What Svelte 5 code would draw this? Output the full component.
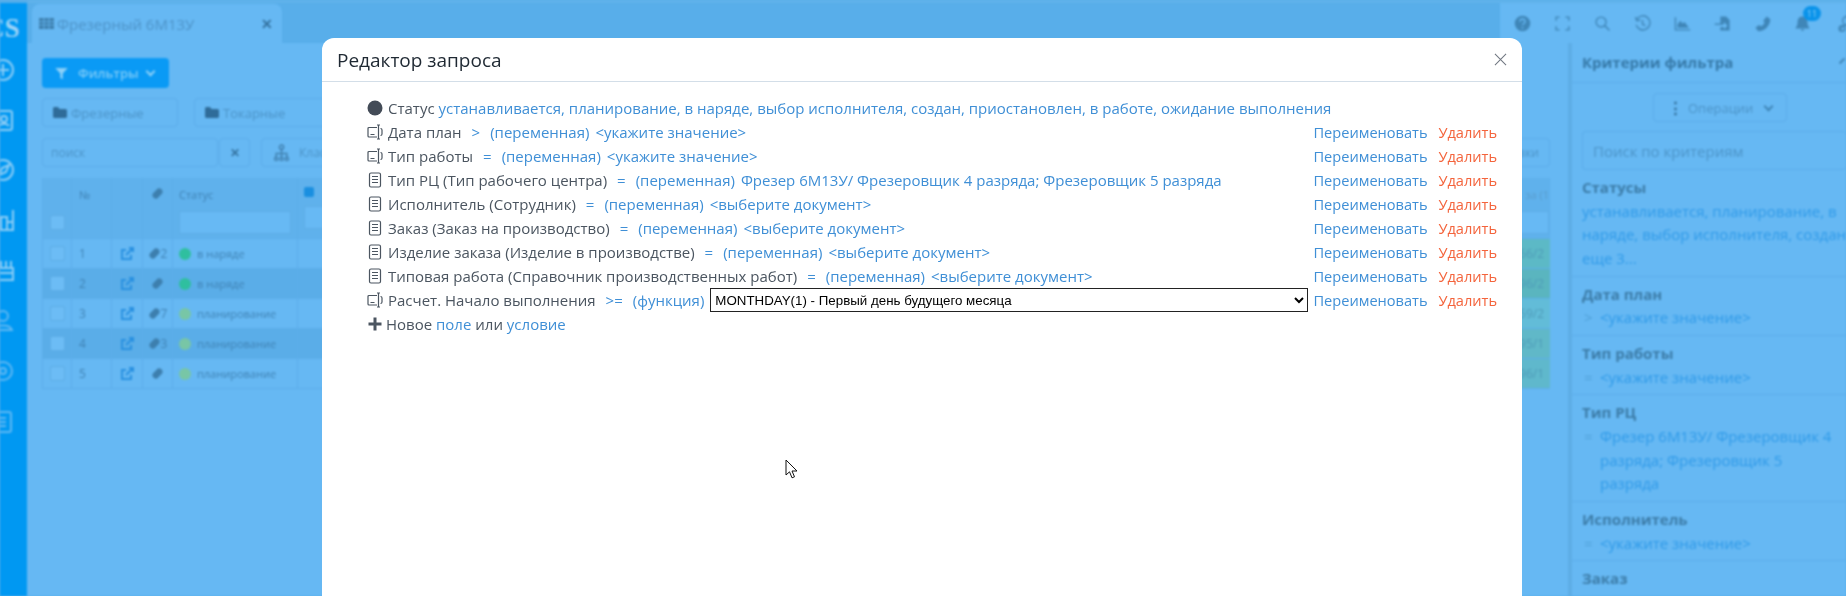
<script>
  const rows = [
    { icon: "var", name: "Дата план", op: ">", kind: "(переменная)", value: "<укажите значение>" },
    { icon: "var", name: "Тип работы", op: "=", kind: "(переменная)", value: "<укажите значение>" },
    { icon: "doc", name: "Тип РЦ (Тип рабочего центра)", op: "=", kind: "(переменная)", value: "Фрезер 6М13У/ Фрезеровщик 4 разряда; Фрезеровщик 5 разряда" },
    { icon: "doc", name: "Исполнитель (Сотрудник)", op: "=", kind: "(переменная)", value: "<выберите документ>" },
    { icon: "doc", name: "Заказ (Заказ на производство)", op: "=", kind: "(переменная)", value: "<выберите документ>" },
    { icon: "doc", name: "Изделие заказа (Изделие в производстве)", op: "=", kind: "(переменная)", value: "<выберите документ>" },
    { icon: "doc", name: "Типовая работа (Справочник производственных работ)", op: "=", kind: "(переменная)", value: "<выберите документ>" },
    { icon: "var", name: "Расчет. Начало выполнения", op: ">=", kind: "(функция)", select: true },
  ]
  const tableRows = [
    { n: 1, clip: "2", status: "в наряде", dot: "#2fbf9f", date: "09.1", last: "66/2", lastBg: "#5cb9c6", alt: false },
    { n: 2, clip: "", status: "в наряде", dot: "#2fbf9f", date: "09.1", last: "96/2", lastBg: "#5ab5bf", alt: true },
    { n: 3, clip: "7", status: "планирование", dot: "#78c6a6", date: "10.1", last: "59/2", lastBg: "#62bcd8", alt: false },
    { n: 4, clip: "3", status: "планирование", dot: "#78c6a6", date: "11.1", last: "95/1", lastBg: "#60b8c8", alt: true },
    { n: 5, clip: "", status: "планирование", dot: "#78c6a6", date: "16.1", last: "96/1", lastBg: "#5fb8cc", alt: false },
  ]
  const criteria = [
    { title: "Дата план", op: ">", value: "<укажите значение>" },
    { title: "Тип работы", op: "=", value: "<укажите значение>" },
    { title: "Тип РЦ", op: "=", value: "Фрезер 6М13У/ Фрезеровщик 4 разряда; Фрезеровщик 5 разряда" },
    { title: "Исполнитель", op: "=", value: "<укажите значение>" },
    { title: "Заказ", op: "=", value: "" },
  ]
</script>

<div class="page">
  <div class="back">
    <aside class="rail">
      <span class="logo">CS</span>
      <svg class="rail-icon" viewBox="0 0 24 24"><circle cx="3" cy="12" r="10"/><path d="M3 6v12M-3 12h12"/></svg>
      <svg class="rail-icon" viewBox="0 0 24 24"><rect x="-4" y="3" width="16" height="19" rx="2"/><circle cx="4" cy="11" r="3"/><path d="M-1 18c2-3 8-3 10 0"/></svg>
      <svg class="rail-icon" viewBox="0 0 24 24"><circle cx="3" cy="12" r="10"/><path d="M-1 17l3-7 7-3-3 7z"/></svg>
      <svg class="rail-icon" viewBox="0 0 24 24"><path d="M-3 22h17M1 22V9h6v13M7 14h6v8M13 2v12"/></svg>
      <svg class="rail-icon" viewBox="0 0 24 24"><rect x="-4" y="10" width="17" height="12"/><path d="M1 10V3M6 10V3M11 10V3M-4 15h17"/></svg>
      <svg class="rail-icon faint" viewBox="0 0 24 24"><circle cx="3" cy="8" r="5"/><path d="M-6 22c2-6 16-6 18 0z"/></svg>
      <svg class="rail-icon faint" viewBox="0 0 24 24"><circle cx="3" cy="12" r="9"/><circle cx="3" cy="12" r="3"/></svg>
      <svg class="rail-icon faint" viewBox="0 0 24 24"><rect x="-6" y="2" width="17" height="20" rx="2"/><path d="M-2 8h8M-2 12h8M-2 16h8"/></svg>
    </aside>

    <div class="main">
      <header class="topbar">
        <div class="tab">
          <span class="tab-title">
            <svg class="grid-ico" viewBox="0 0 15 11"><path d="M0 0h15v11H0z"/><path d="M0 3.500h15M0 7h15M5 0v11M10 0v11" class="grid-lines"/></svg>
            Фрезерный 6М13У
          </span>
          <b class="tab-x">✕</b>
        </div>
        <div class="tools">
          <svg viewBox="0 0 24 24"><circle cx="12" cy="12" r="11" class="fill"/><path d="M8.500 9.500c0-5 7-5 7 0 0 2.500-3.500 2.500-3.500 5M12 17v2.500" class="white"/></svg>
          <svg viewBox="0 0 24 24"><path d="M3 8V3h5M16 3h5v5M21 16v5h-5M8 21H3v-5"/></svg>
          <svg viewBox="0 0 24 24"><circle cx="10" cy="10" r="7"/><path d="M15 15l7 7"/></svg>
          <svg viewBox="0 0 24 24"><path d="M4 6a10 10 0 1 1-1 8M2 3l2 5 5-1M12 7v6l4 2"/></svg>
          <svg viewBox="0 0 24 24"><path d="M2 3v18h21"/><path d="M5 18v-5l4-5 3 4 3-2 6 8z" class="fill"/></svg>
          <svg viewBox="0 0 24 24"><path d="M9 2h8l5 5v15H9v-5h5v3l5-5-5-5v3H9z" class="fill"/><path d="M1 13h12"/></svg>
          <svg viewBox="0 0 24 24"><path d="M18 2l5 4c0 9-8 17-17 17l-4-5 5-4 3 2c2-1 4-3 5-5l-2-3z" class="fill"/></svg>
          <span class="bell">
            <svg viewBox="0 0 24 24"><path d="M12 2c6 0 7 5 7 9s2 6 3 8H2c1-2 3-4 3-8s1-9 7-9zM9 20h6l-3 3z" class="fill"/></svg>
            <em>11</em>
          </span>
          <span class="tool-sep"></span>
          <svg viewBox="0 0 24 24"><circle cx="14" cy="8" r="6"/><path d="M5 22c0-6 4-8 9-8"/><circle cx="7" cy="19" r="4"/></svg>
        </div>
      </header>

      <div class="content">
        <section class="list">
          <button class="filter-btn"><svg viewBox="0 0 24 24"><path d="M2 3h20l-8 9v9l-4-2v-7z"/></svg>Фильтры<span class="chev"></span></button>
          <div class="folders">
            <span class="folder"><svg class="folder-ico" viewBox="0 0 14 11"><path d="M0 1.500C0 .700.700 0 1.500 0h3.500l1.500 2h6C13.300 2 14 2.700 14 3.500V9.500c0 .800-.700 1.500-1.500 1.500h-11C.700 11 0 10.300 0 9.500z"/></svg>Фрезерные</span>
            <span class="folder wide"><svg class="folder-ico" viewBox="0 0 14 11"><path d="M0 1.500C0 .700.700 0 1.500 0h3.500l1.500 2h6C13.300 2 14 2.700 14 3.500V9.500c0 .800-.700 1.500-1.500 1.500h-11C.700 11 0 10.300 0 9.500z"/></svg>Токарные</span>
          </div>
          <div class="searchbar">
            <span class="search">поиск</span>
            <span class="clear">✕</span>
            <span class="class-btn">
              <svg viewBox="0 0 16 16"><circle cx="8" cy="3" r="2"/><path d="M8 5v4M3 13V9h10v4M8 9v4"/><circle cx="3" cy="14" r="1.500"/><circle cx="8" cy="14" r="1.500"/><circle cx="13" cy="14" r="1.500"/></svg>
              Классификатор
            </span>
            <span class="spacer"></span>
            <span class="end-btn">Группировки</span>
          </div>
          <div class="table">
            <div class="tr head">
              <span class="c box"><i class="check"></i></span>
              <span class="c num">№</span>
              <span class="c"></span>
              <span class="c"><svg class="clip" viewBox="0 0 14 14"><path d="M2 7l5-5c3-2 7 2 5 5l-5 5c-3 2-7-2-5-5z"/></svg></span>
              <span class="c col">Статус<i class="filter-input"></i></span>
              <span class="c col"><i class="checked"></i><i class="filter-input"></i></span>
              <span class="c col end">за (1<i class="filter-input"></i></span>
            </div>
            {#each tableRows as row}
              <div class="tr" class:alt={row.alt}>
                <span class="c"><i class="check"></i></span>
                <span class="c num">{row.n}</span>
                <span class="c"><svg class="edit" viewBox="0 0 14 14"><path d="M11 8v4H2V3h4M6 8l7-7M9 1h4v4"/></svg></span>
                <span class="c"><svg class="clip" viewBox="0 0 14 14"><path d="M2 7l5-5c3-2 7 2 5 5l-5 5c-3 2-7-2-5-5z"/></svg>{row.clip}</span>
                <span class="c st"><i class="dot" style="background:{row.dot}"></i>{row.status}</span>
                <span class="c">{row.date}</span>
                <span class="c end-cell" style="background:{row.lastBg}">{row.last}</span>
              </div>
            {/each}
          </div>
        </section>

        <section class="panel">
          <div class="panel-head">Критерии фильтра<span class="panel-x"></span></div>
          <div class="ops"><span class="ops-btn"><b>⋮</b>Операции<span class="chev dark"></span></span></div>
          <div class="panel-search">Поиск по критериям</div>
          <div class="crit">
            <strong>Статусы</strong>
            <p>устанавливается, планирование, в наряде, выбор исполнителя, создан, еще 3...</p>
          </div>
          {#each criteria as c}
            <div class="crit">
              <strong>{c.title}</strong>
              {#if c.value}
                <div class="crit-row">
                  <span class="crit-op">{c.op}</span>
                  <p>{c.value}</p>
                  <i class="trash"></i>
                </div>
              {/if}
            </div>
          {/each}
        </section>
      </div>
    </div>
  </div>

  <div class="overlay">
    <div class="modal">
      <div class="modal-head">
        <h5>Редактор запроса</h5>
        <svg class="close" viewBox="0 0 14 14"><path d="M1 1l12 12M13 1L1 13"/></svg>
      </div>
      <div class="modal-body">
        <div class="row first">
          <span class="ico"><svg viewBox="0 0 16 16"><circle cx="8" cy="8" r="7.500" class="solid"/></svg></span>
          <span>Статус <a href="#s">устанавливается, планирование, в наряде, выбор исполнителя, создан, приостановлен, в работе, ожидание выполнения</a></span>
        </div>
        {#each rows as row}
          <div class="row">
            <span class="ico">
              {#if row.icon === "var"}
                <svg viewBox="0 0 16 16"><path d="M10 3.500H2a1 1 0 0 0-1 1V12a1 1 0 0 0 1 1h8M3.500 10.500h4M10 1h3M10 15h3M11.500 1v14M13.500 4.500c1 0 1.500.500 1.500 1.500v4c0 1-.500 1.500-1.500 1.500"/></svg>
              {:else}
                <svg viewBox="0 0 16 16"><rect x="2.500" y="1" width="11" height="14" rx="1.500"/><path d="M5 4.500h6M5 7.500h6M5 10.500h6"/></svg>
              {/if}
            </span>
            <span class="name">{row.name}</span>
            <a class="op" href="#o">{row.op}</a>
            <a class="kind" href="#k">{row.kind}</a>
            {#if row.select}
              <select class="fn">
                <option>MONTHDAY(1) - Первый день будущего месяца</option>
              </select>
            {:else}
              <a class="value" href="#v">{row.value}</a>
            {/if}
            <span class="actions">
              <a href="#r">Переименовать</a>
              <a class="del" href="#d">Удалить</a>
            </span>
          </div>
        {/each}
        <div class="row new">
          <span class="ico plus"><svg viewBox="0 0 16 16"><path d="M8 1.500v13M1.500 8h13" class="thick"/></svg></span>
          <span>Новое <a href="#f">поле</a> или <a href="#c">условие</a></span>
        </div>
      </div>
    </div>
    <svg class="cursor" viewBox="0 0 13 21"><path d="M1 1v15l3.500-3.200 2.500 6 2.500-1-2.500-5.800h5z"/></svg>
  </div>
</div>

<style>
  :global(body) {
    margin: 0;
    overflow: hidden;
    font-family: "Open Sans", sans-serif;
  }
  .page {
    position: relative;
    height: 596px;
    overflow: hidden;
    background: #58aeea;
  }
  .back {
    display: flex;
    height: 100%;
    filter: blur(1.1px);
    color: #3f86b8;
    font-size: 13px;
  }
  .rail {
    width: 27px;
    flex: none;
    margin-top: 3px;
    background: #0098f2;
    display: flex;
    flex-direction: column;
    overflow: hidden;
    color: #9dd3f7;
  }
  .logo {
    font: bold 27px "Liberation Serif", serif;
    height: 39px;
    line-height: 50px;
    margin-left: -15px;
    white-space: nowrap;
  }
  .rail-icon {
    width: 24px;
    height: 24px;
    flex: none;
    margin-bottom: 26px;
    fill: none;
    stroke: #8ccdf6;
    stroke-width: 2;
    overflow: visible;
  }
  .rail-icon:first-of-type {
    margin-top: 16px;
  }
  .rail-icon.faint {
    stroke: #5fb8f3;
    margin-bottom: 27px;
  }
  .main {
    flex: 1;
    min-width: 0;
    display: flex;
    flex-direction: column;
  }
  .topbar {
    height: 43px;
    flex: none;
    display: flex;
    justify-content: space-between;
    border-top: 3px solid #60b2ea;
    box-sizing: border-box;
  }
  .tab {
    width: 250px;
    margin-left: 5px;
    margin-top: 1px;
    box-sizing: border-box;
    padding: 0 9px 0 7px;
    background: #66b8f3;
    border-radius: 8px 8px 0 0;
    display: flex;
    align-items: center;
    justify-content: space-between;
    font-size: 15px;
    color: #4d93c8;
  }
  .tab-title {
    display: flex;
    align-items: center;
    gap: 3px;
  }
  .grid-ico {
    width: 15px;
    height: 11px;
    fill: #3d7fae;
  }
  .grid-lines {
    fill: none;
    stroke: #66b8f3;
    stroke-width: 0.800;
  }
  .tab-x {
    color: #33719e;
    font-size: 14px;
  }
  .tools {
    display: flex;
    align-items: center;
    background: #66b8f3;
    width: 346px;
    gap: 23px;
    padding-left: 14px;
    box-sizing: border-box;
  }
  .tools svg {
    width: 17px;
    height: 17px;
    flex: none;
    fill: none;
    stroke: #3f86b8;
    stroke-width: 2;
  }
  .tools .fill {
    fill: #3f86b8;
    stroke: none;
  }
  .tools .white {
    stroke: #66b8f3;
  }
  .bell {
    position: relative;
    display: flex;
  }
  .bell em {
    position: absolute;
    left: 9px;
    top: -9px;
    width: 18px;
    height: 15px;
    border-radius: 8px;
    background: #0a93ea;
    color: #8fd0f8;
    font: normal 9px/15px "Open Sans", sans-serif;
    text-align: center;
  }
  .tool-sep {
    width: 1px;
    height: 40px;
    background: #5dade6;
    margin-left: -4px;
    margin-right: -16px;
  }
  .content {
    flex: 1;
    min-height: 0;
    display: flex;
    background: #66b8f3;
  }
  .list {
    flex: 1;
    min-width: 0;
    padding: 15px 18px 0 15px;
  }
  .filter-btn {
    display: flex;
    align-items: center;
    gap: 9px;
    width: 127px;
    height: 30px;
    padding: 0 12px;
    border: 0;
    border-radius: 4px;
    background: #0a9af5;
    color: #7ccaf8;
    font: 600 13px "Open Sans", sans-serif;
  }
  .filter-btn svg {
    width: 15px;
    height: 15px;
    fill: #8cd0f8;
    flex: none;
  }
  .chev {
    width: 5px;
    height: 5px;
    flex: none;
    margin: -3px 0 0 -1px;
    border-right: 2px solid #8cd0f8;
    border-bottom: 2px solid #8cd0f8;
    transform: rotate(45deg);
  }
  .chev.dark {
    border-color: #3f86b8;
    margin-left: 12px;
  }
  .folders {
    display: flex;
    gap: 16px;
    margin-top: 10px;
  }
  .folder {
    width: 136px;
    height: 29px;
    box-sizing: border-box;
    border: 1px solid #5cadea;
    border-radius: 4px;
    display: flex;
    align-items: center;
    gap: 4px;
    padding-left: 10px;
    color: #4c94c8;
  }
  .folder.wide {
    width: 170px;
  }
  .folder-ico {
    width: 14px;
    height: 11px;
    fill: #2f6c99;
  }
  .searchbar {
    display: flex;
    align-items: stretch;
    height: 29px;
    margin-top: 11px;
    color: #4c94c8;
  }
  .search,
  .clear,
  .class-btn,
  .end-btn {
    box-sizing: border-box;
    border: 1px solid #5cadea;
    border-radius: 4px;
    display: flex;
    align-items: center;
    font-size: 12px;
    white-space: nowrap;
  }
  .search {
    width: 176px;
    padding-left: 8px;
  }
  .clear {
    width: 31px;
    margin-left: 1px;
    justify-content: center;
    color: #33719e;
    font-weight: 700;
  }
  .class-btn {
    width: 170px;
    margin-left: 11px;
    padding-left: 11px;
    gap: 9px;
  }
  .class-btn svg {
    width: 17px;
    height: 17px;
    fill: none;
    stroke: #3f7fae;
    stroke-width: 1.300;
  }
  .spacer {
    flex: 1;
  }
  .end-btn {
    width: 110px;
    justify-content: flex-end;
    padding-right: 10px;
  }
  .table {
    margin-top: 11px;
    border-left: 1px solid #5cadea;
  }
  .tr {
    display: grid;
    grid-template-columns: 29px 40px 31px 30px 125px 1fr 90px;
    height: 30px;
    border-bottom: 1px solid #5cadea;
    box-sizing: border-box;
    color: #3f82b4;
    font-size: 12px;
  }
  .tr.alt {
    background: #5aade8;
  }
  .tr.head {
    height: 61px;
    background: #5fb1ec;
  }
  .c {
    display: flex;
    align-items: center;
    justify-content: center;
    border-right: 1px solid #5cadea;
    position: relative;
    min-width: 0;
  }
  .num {
    justify-content: flex-start;
    padding-left: 7px;
  }
  .head .c {
    align-items: flex-start;
    padding-top: 9px;
    box-sizing: border-box;
    font-size: 11px;
  }
  .head .box {
    align-items: flex-end;
    padding-bottom: 8px;
  }
  .head .col {
    align-items: stretch;
    flex-direction: column;
    justify-content: flex-start;
    padding-left: 6px;
    padding-right: 6px;
    gap: 9px;
  }
  .head .end {
    padding: 9px 0 0;
    color: #5a9ccc;
    text-align: right;
  }
  .st {
    justify-content: flex-start;
    padding-left: 6px;
    gap: 6px;
    font-size: 11px;
    white-space: nowrap;
  }
  .end-cell {
    justify-content: flex-end;
    padding-right: 6px;
    border-right: 0;
    color: #4e9bb8;
  }
  .check {
    width: 13px;
    height: 13px;
    border: 1px solid #5dade6;
    border-radius: 2px;
    background: #6cbcf5;
  }
  .checked {
    width: 10px;
    height: 10px;
    background: #1a8fe0;
    border-radius: 2px;
  }
  .filter-input {
    display: block;
    height: 23px;
    box-sizing: border-box;
    border: 1px solid #5dade6;
    background: #67b9f4;
  }
  .clip {
    width: 13px;
    height: 13px;
    flex: none;
    fill: #3d7fae;
  }
  .edit {
    width: 14px;
    height: 14px;
    fill: none;
    stroke: #2890e0;
    stroke-width: 2;
  }
  .dot {
    width: 12px;
    height: 12px;
    flex: none;
    border-radius: 50%;
  }
  .panel {
    width: 278px;
    flex: none;
    box-sizing: border-box;
    border-left: 4px solid #5dade6;
    overflow: hidden;
  }
  .panel-head {
    position: relative;
    height: 40px;
    box-sizing: border-box;
    padding: 9px 10px 0;
    border-bottom: 1px solid #5cadea;
    font-weight: 700;
    font-size: 15px;
    color: #3679a8;
  }
  .panel-x {
    position: absolute;
    right: -3px;
    top: 17px;
    width: 7px;
    height: 7px;
    border-left: 2px solid #3f86b8;
    transform: rotate(45deg);
  }
  .ops {
    display: flex;
    padding: 10px 0 0 81px;
  }
  .ops-btn {
    width: 134px;
    height: 29px;
    box-sizing: border-box;
    border: 1px solid #5cadea;
    border-radius: 4px;
    display: flex;
    align-items: center;
    padding-left: 13px;
    font-size: 13px;
    color: #4c94c8;
  }
  .ops-btn b {
    width: 8px;
    flex: none;
    margin-right: 13px;
    text-align: center;
    color: #33719e;
    font-size: 17px;
  }
  .panel-search {
    box-sizing: border-box;
    height: 39px;
    margin: 9px 0 0 10px;
    padding: 9px 10px;
    border: 1px solid #5cadea;
    border-right: 0;
    border-radius: 4px;
    font-size: 15px;
    color: #4c94c8;
  }
  .crit {
    box-sizing: border-box;
    width: 300px;
    padding: 6px 10px 4.900px;
    border-bottom: 1px solid #5cadea;
    font-size: 15px;
    line-height: 23.700px;
  }
  .crit strong {
    display: block;
    color: #3c7ca8;
  }
  .crit p {
    margin: 0;
    color: #2f9ae8;
  }
  .crit-row {
    display: flex;
    gap: 8px;
    width: 272px;
  }
  .crit-row p {
    width: 240px;
    flex: none;
  }
  .crit-op {
    width: 8px;
    flex: none;
    color: #4fa0d8;
    padding-left: 2px;
  }
  .trash {
    width: 9px;
    height: 13px;
    flex: none;
    margin-top: 5px;
    background: #3f86b8;
  }
  .overlay {
    position: absolute;
    inset: 0;
    display: flex;
    justify-content: center;
    padding: 38px 2px 0 0;
  }
  .modal {
    width: 1200px;
    height: 620px;
    flex: none;
    background: #fff;
    border-radius: 12px;
    overflow: hidden;
    color: #4b5560;
    font-size: 15px;
  }
  .modal-head {
    height: 43px;
    display: flex;
    align-items: center;
    justify-content: space-between;
    padding: 0 15px;
    border-bottom: 1px solid #d3dee8;
  }
  .modal-head h5 {
    margin: 0;
    font-size: 19px;
    font-weight: 400;
    color: #1f2933;
  }
  .close {
    width: 13px;
    height: 13px;
    fill: none;
    stroke: #6f7680;
    stroke-width: 1.100;
  }
  .modal-body {
    padding: 13px 25px 0 45px;
  }
  .row {
    display: flex;
    align-items: center;
    height: 24px;
    white-space: nowrap;
  }
  .row.first {
    height: 25px;
  }
  .row a {
    color: #3f8fd6;
    text-decoration: none;
  }
  .row a.del {
    color: #f4643c;
    margin-left: 7px;
  }
  .ico {
    width: 16px;
    height: 16px;
    flex: none;
    margin-right: 5px;
  }
  .ico svg {
    display: block;
    width: 16px;
    height: 16px;
    fill: none;
    stroke: #4b5560;
    stroke-width: 1.200;
  }
  .ico .solid {
    fill: #434b57;
    stroke: none;
  }
  .ico .thick {
    stroke-width: 3;
  }
  .plus {
    margin-right: 3px;
  }
  .op {
    margin-left: 10px;
  }
  .kind {
    margin-left: 10px;
  }
  .value {
    margin-left: 6px;
  }
  .fn {
    flex: 1;
    min-width: 0;
    height: 24px;
    margin-left: 6px;
    border: 1px solid #222;
    border-radius: 0;
    background: #fff;
    color: #000;
    font: 13.330px "Liberation Sans", sans-serif;
    padding: 0;
  }
  .actions {
    margin-left: auto;
    padding-left: 5px;
    font-size: 14.600px;
  }
  .cursor {
    position: absolute;
    left: 785px;
    top: 459px;
    width: 13px;
    height: 21px;
    fill: #fff;
    stroke: #111;
    stroke-width: 1;
  }
</style>
